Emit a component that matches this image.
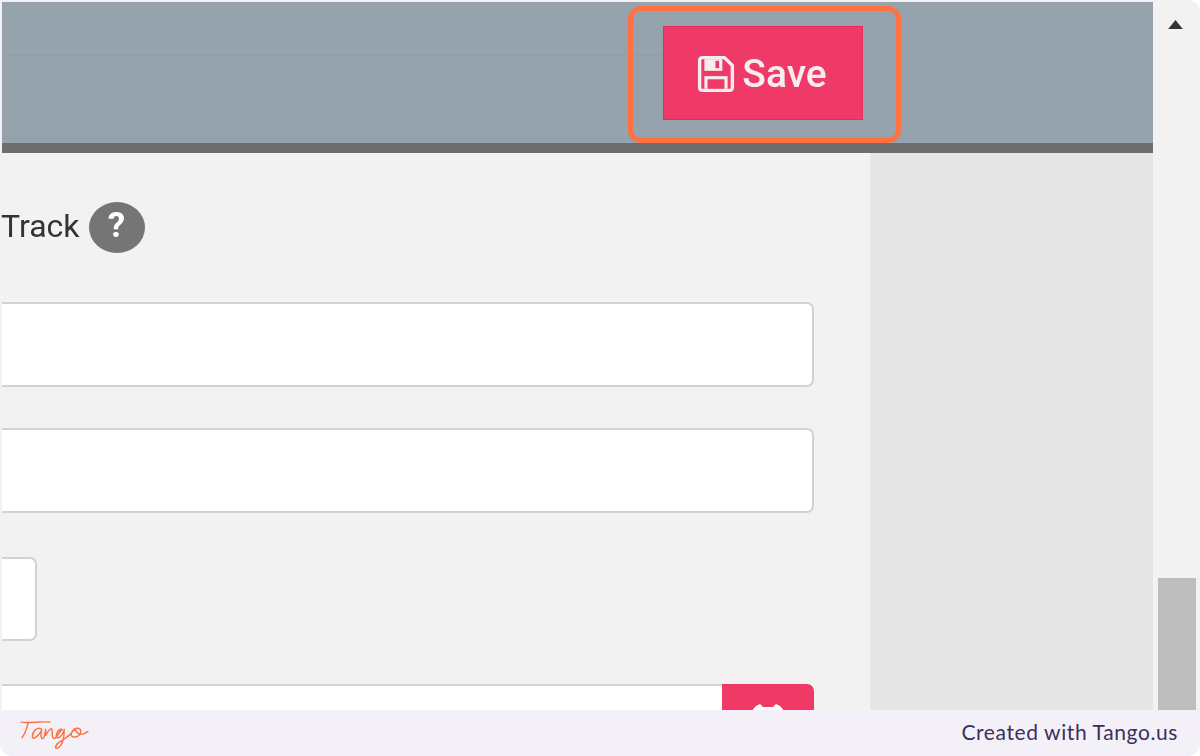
<div class="page">
  <div class="shot">
    <div class="view">
      <header class="bar">
        <div class="hline one"></div>
        <div class="hline two"></div>
        <div class="vline"></div>
        <button class="save">
          <svg class="disk" viewBox="0 0 36 36" width="38" height="38" aria-hidden="true">
            <path d="M5 2.500h21l7.500 7.500v21a2.500 2.500 0 0 1-2.500 2.500H5A2.500 2.500 0 0 1 2.500 31V5A2.500 2.500 0 0 1 5 2.500z" fill="none" stroke="currentColor" stroke-width="3.200" stroke-linejoin="round"/>
            <path d="M7 4h17v11H7z" fill="currentColor"/>
            <path d="M17.500 5.500h3.500v7h-3.500z" fill="#ef3a68"/>
            <path d="M7 20h22v12H7z" fill="currentColor"/>
            <path d="M10 23h16v9H10z" fill="#ef3a68"/>
          </svg>
          <span>Save</span>
        </button>
        <div class="ring"></div>
      </header>
      <div class="edge"></div>
      <div class="body">
        <section class="form">
          <div class="label">
            <span class="track">Track</span>
            <span class="help">?</span>
          </div>
          <div class="field"></div>
          <div class="field second"></div>
          <div class="field short"></div>
          <div class="group">
            <div class="field joined"></div>
            <div class="addon">
              <svg viewBox="0 0 60 60" width="60" height="60" aria-hidden="true">
                <path d="M12 30a18 18 0 0 1 6-12l4-2 3 3h10l3-3 4 2a18 18 0 0 1 6 12z" fill="#fff"/>
              </svg>
            </div>
          </div>
        </section>
        <aside class="side"></aside>
      </div>
    </div>
    <div class="scroll">
      <svg class="arrow" viewBox="2 0 16 12" width="21" height="14" aria-hidden="true">
        <path d="M10 1l8 10H2z" fill="#333"/>
      </svg>
      <div class="thumb"></div>
    </div>
  </div>
  <footer class="foot">
    <svg class="logo" viewBox="0 0 70 32" width="72" height="33" role="img" aria-label="Tango">
      <path d="M2 4C10 5 22 3 30 4M9 4C8 9 6 15 3 19" fill="none" stroke="#ff7043" stroke-width="1.400" stroke-linecap="round"/>
      <path d="M22 11C18 8 13 13 13 18C13 21 17 20 22 12C21 15 21 20 23 20C25 20 25 15 26 11C26 15 26 16 26 17C28 13 31 9 32 11C33 14 31 19 34 20C37 20 38 14 42 11C38 10 35 17 37 19C40 20 43 15 44 11C44 18 43 26 38 29C34 31 35 26 40 23C46 19 50 17 52 13C54 9 60 9 60 13C60 18 53 20 51 17C50 14 52 12 55 12C58 17 62 17 67 13" fill="none" stroke="#ff7043" stroke-width="1.400" stroke-linecap="round" stroke-linejoin="round"/>
    </svg>
    <span class="credit">Created with Tango.us</span>
  </footer>
</div>

<style>
  :global(body) {
    margin: 0;
    background: #fff;
  }
  .page {
    width: 1200px;
    height: 756px;
    display: flex;
    flex-direction: column;
    overflow: hidden;
    background: #f3f1f7;
    border-radius: 0 12px 12px 12px;
  }
  .shot {
    height: 710px;
    display: flex;
    padding-left: 2px;
    box-sizing: border-box;
    overflow: hidden;
  }
  .view {
    width: 1151px;
    padding-top: 2px;
    box-sizing: border-box;
    display: flex;
    flex-direction: column;
    filter: blur(0.7px);
  }
  .bar {
    position: relative;
    flex: none;
    height: 141px;
    background: #96a3ac;
    padding: 24px 0 0 661px;
    box-sizing: border-box;
  }
  .hline {
    position: absolute;
    left: 0;
    right: 290px;
    height: 1px;
    background: #919ea7;
  }
  .hline.one { top: 53px; }
  .hline.two { top: 136px; right: 340px; }
  .vline {
    position: absolute;
    left: 811px;
    top: 118px;
    width: 1px;
    height: 23px;
    background: #919ea7;
  }
  .save {
    width: 200px;
    height: 94px;
    border: 1px solid #ea2a5c;
    background: #ef3a68;
    color: #f6edf0;
    padding: 3px 0 0 2px;
    box-sizing: border-box;
    display: flex;
    align-items: center;
    justify-content: center;
    gap: 7px;
    font: 500 39px/1 Roboto, sans-serif;
    position: relative;
  }
  .disk {
    margin-left: -4px;
    margin-top: -1px;
  }
  .ring {
    position: absolute;
    left: 626px;
    top: 4px;
    width: 273px;
    height: 137px;
    border: 5px solid #ff7043;
    border-radius: 13px;
    box-sizing: border-box;
  }
  .edge {
    flex: none;
    height: 10px;
    background: #6e6e6e;
  }
  .body {
    flex: 1;
    display: flex;
    min-height: 0;
  }
  .form {
    width: 868px;
    background: #f2f2f2;
    box-sizing: border-box;
    padding-top: 49px;
    display: flex;
    flex-direction: column;
    align-items: flex-start;
  }
  .side {
    flex: 1;
    background: #e6e6e6;
  }
  .label {
    height: 51px;
    display: flex;
    align-items: center;
    gap: 8px;
    margin-bottom: 49px;
  }
  .track {
    font: 400 32px/1 Roboto, sans-serif;
    color: #333;
    margin-top: -3px;
    margin-left: -1px;
  }
  .help {
    width: 56px;
    height: 51px;
    border-radius: 50%;
    background: #757575;
    color: #fff;
    display: flex;
    align-items: center;
    justify-content: center;
    font: 700 35px/1 Roboto, sans-serif;
    padding-bottom: 4px;
    box-sizing: border-box;
    margin-left: 1px;
  }
  .field {
    width: 812px;
    height: 85px;
    background: #fff;
    border: 2px solid #d2d2d2;
    border-left: 0;
    border-radius: 0 7px 7px 0;
    box-sizing: border-box;
    margin-bottom: 41px;
    flex: none;
  }
  .field.second {
    margin-bottom: 44px;
  }
  .field.short {
    width: 35px;
    height: 84px;
    margin-bottom: 43px;
  }
  .group {
    width: 812px;
    display: flex;
    flex: none;
  }
  .field.joined {
    width: 720px;
    height: 80px;
    border-right: 0;
    border-radius: 0;
    border-bottom: 0;
    margin-bottom: 0;
  }
  .addon {
    width: 92px;
    height: 80px;
    padding-top: 4px;
    box-sizing: border-box;
    background: #ef3a68;
    border-radius: 0 7px 0 0;
    display: flex;
    justify-content: center;
  }
  .scroll {
    flex: 1;
    background: #f2f2f2;
    display: flex;
    flex-direction: column;
    align-items: center;
    padding-top: 19px;
    box-sizing: border-box;
    border-radius: 0 12px 0 0;
    filter: blur(0.4px);
  }
  .arrow {
    display: block;
    margin-right: 2px;
  }
  .thumb {
    width: 38px;
    height: 132px;
    margin-top: 548px;
    background: #bdbdbd;
    flex: none;
  }
  .foot {
    flex: 1;
    display: flex;
    align-items: center;
    justify-content: space-between;
    padding: 0 22px 0 19px;
    box-sizing: border-box;
  }
  .logo {
    display: block;
    margin-top: 3px;
  }
  .credit {
    font: 400 21px/1 Lato, sans-serif;
    color: #3c2f5c;
    letter-spacing: 0.6px;
    margin-bottom: 3px;
  }
</style>
